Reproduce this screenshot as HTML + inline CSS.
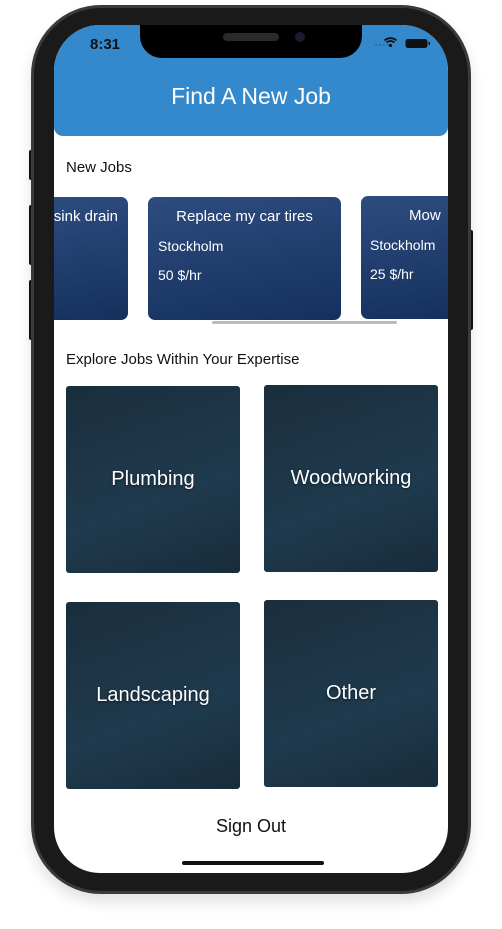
<!DOCTYPE html>
<html><head><style>
*{margin:0;padding:0;box-sizing:border-box}
body{width:502px;height:929px;background:#fff;position:relative;overflow:hidden;font-family:"Liberation Sans",sans-serif}
.abs{position:absolute}
.phone{left:31px;top:5px;width:440px;height:889px;border-radius:70px;background:#1a1a1a;border:3px solid #3a3a3a;box-shadow:0 8px 14px rgba(0,0,0,.12)}
.screen{left:54px;top:25px;width:394px;height:848px;border-radius:46px;background:#fff;overflow:hidden}
.hdr{left:0;top:0;width:394px;height:111px;background:#3389cc;border-radius:0 0 9px 9px}
.notch{left:86px;top:0;width:222px;height:33px;background:#000;border-radius:0 0 22px 22px}
.card{background:linear-gradient(170deg,#2d4c7f,#15305d);border-radius:7px;color:#fff;font-size:14px}
.tile{background:linear-gradient(160deg,#1a2e3d,#1f3a4e 60%,#182c3b);border-radius:3px;color:#fff;font-size:20px;display:flex;align-items:center;justify-content:center;text-shadow:0 1px 2px rgba(0,0,0,.5)}
.btn{background:#111}
</style></head><body>
<div class="abs btn" style="left:29px;top:150px;width:4px;height:30px;border-radius:2px"></div>
<div class="abs btn" style="left:29px;top:205px;width:4px;height:60px;border-radius:2px"></div>
<div class="abs btn" style="left:29px;top:280px;width:4px;height:60px;border-radius:2px"></div>
<div class="abs btn" style="left:469px;top:230px;width:4px;height:100px;border-radius:2px"></div>
<div class="abs phone"></div>
<div class="abs screen">
  <div class="abs hdr"></div>
  <div class="abs notch"></div>
  <div class="abs" style="left:169px;top:8px;width:56px;height:8px;border-radius:4px;background:#2a2a2a"></div>
  <div class="abs" style="left:241px;top:7px;width:10px;height:10px;border-radius:5px;background:#1a1a30"></div>
  <div class="abs" style="left:36px;top:11px;font-size:15px;font-weight:bold;color:#111">8:31</div>
  <svg class="abs" style="left:320px;top:10px" width="60" height="14" viewBox="0 0 60 14">
    <g fill="#2a6aa0"><circle cx="2" cy="10" r="1"/><circle cx="6" cy="10" r="1"/><circle cx="10" cy="10" r="1"/><circle cx="14" cy="10" r="1"/></g>
    <path d="M10.5 5.5a9 9 0 0 1 12 0M12.5 7.5a6 6 0 0 1 8 0" stroke="#111" stroke-width="1.8" fill="none" transform="translate(0,0)"/>
    <circle cx="16.5" cy="10.5" r="1.6" fill="#111"/>
    <rect x="31.5" y="4" width="22" height="9" rx="2.5" fill="#111"/>
    <rect x="54.5" y="7" width="1.5" height="3" fill="#111"/>
  </svg>
  <div class="abs" style="left:0;top:58px;width:394px;text-align:center;color:#fff;font-size:23px">Find A New Job</div>
  <div class="abs" style="left:12px;top:134px;font-size:15px;color:#111">New Jobs</div>
  <div class="abs card" style="left:-10px;top:172px;width:84px;height:123px"><div style="position:absolute;right:10px;top:11px;font-size:15px">sink drain</div></div>
  <div class="abs card" style="left:94px;top:172px;width:193px;height:123px">
    <div style="position:absolute;left:0;width:193px;text-align:center;top:11px;font-size:15px">Replace my car tires</div>
    <div style="position:absolute;left:10px;top:41px">Stockholm</div>
    <div style="position:absolute;left:10px;top:70px">50 $/hr</div>
  </div>
  <div class="abs card" style="left:307px;top:171px;width:100px;height:123px">
    <div style="position:absolute;left:48px;top:11px;font-size:15px">Mow</div>
    <div style="position:absolute;left:9px;top:41px">Stockholm</div>
    <div style="position:absolute;left:9px;top:70px">25 $/hr</div>
  </div>
  <div class="abs" style="left:158px;top:296px;width:185px;height:3px;background:#bbb;border-radius:2px"></div>
  <div class="abs" style="left:12px;top:326px;font-size:15px;color:#111">Explore Jobs Within Your Expertise</div>
  <div class="abs tile" style="left:12px;top:361px;width:174px;height:187px">Plumbing</div>
  <div class="abs tile" style="left:210px;top:360px;width:174px;height:187px">Woodworking</div>
  <div class="abs tile" style="left:12px;top:577px;width:174px;height:187px">Landscaping</div>
  <div class="abs tile" style="left:210px;top:575px;width:174px;height:187px">Other</div>
  <div class="abs" style="left:0;top:791px;width:394px;text-align:center;font-size:18px;color:#111">Sign Out</div>
  <div class="abs" style="left:128px;top:836px;width:142px;height:4px;border-radius:2px;background:#111"></div>
</div>
</body></html>
